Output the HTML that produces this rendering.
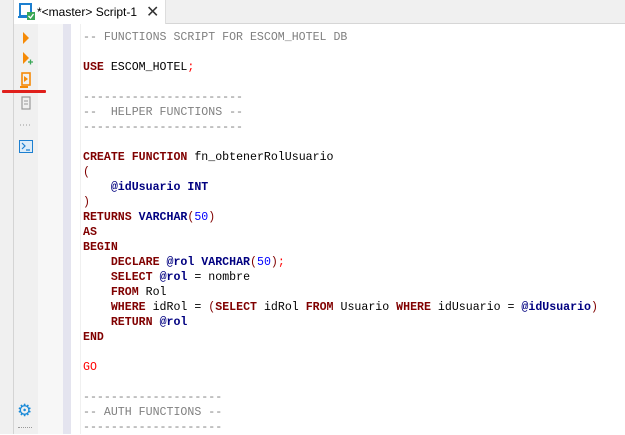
<!DOCTYPE html><html><head><style>
body{margin:0;width:625px;height:434px;overflow:hidden;background:#fff;position:relative;font-family:"Liberation Sans",sans-serif}
.a{position:absolute}
pre{margin:0;font-family:"Liberation Mono",monospace;font-size:11.6px;line-height:15px;color:#000}
.c{color:#808080}.k{color:#800000;font-weight:bold}.t{color:#000080;font-weight:bold}.n{color:#0000ff}.r{color:#ff0000}.p{color:#800000}
</style></head><body>
<div class="a" style="left:0;top:0;width:13px;height:434px;background:#f0f0f0;border-right:1px solid #d4d4d4"></div>
<div class="a" style="left:14px;top:0;width:611px;height:23px;background:#f0f0f0;border-bottom:1px solid #d6d6d6"></div>
<div class="a" style="left:14px;top:0;width:151px;height:24px;background:#fff;border-right:1px solid #ddd"></div>
<svg class="a" style="left:18px;top:3px" width="18" height="18"><rect x="2" y="1" width="11" height="12" fill="none" stroke="#1c7fd0" stroke-width="2"/><path d="M0 14h14" stroke="#1c7fd0" stroke-width="2"/><rect x="9" y="9" width="8" height="8" fill="#3aa757"/><path d="M10.5 13l2 2 3-4" stroke="#fff" fill="none" stroke-width="1.3"/></svg>
<div class="a" style="left:37px;top:5px;font-size:12px;color:#000">*&lt;master&gt; Script-1</div>
<div class="a" style="left:146px;top:2px;font-size:16px;color:#333">✕</div>
<div class="a" style="left:14px;top:24px;width:24px;height:410px;background:#f0f0f0"></div>
<div class="a" style="left:38px;top:24px;width:25px;height:410px;background:#f7f7f7"></div>
<div class="a" style="left:63px;top:24px;width:8px;height:410px;background:#e4e4ef"></div>
<div class="a" style="left:80px;top:24px;width:1px;height:410px;background:#f0f0f0"></div>
<svg class="a" style="left:18px;top:30px" width="16" height="130">
<path d="M5 2l6 6-6 6z" fill="#f58a07"/>
<path d="M5 22l6 6-6 6z" fill="#f58a07"/><path d="M10 32h5M12.5 29.5v5" stroke="#3aa757" stroke-width="1.3"/>
<rect x="4" y="43" width="8" height="12" fill="none" stroke="#f58a07" stroke-width="1.6"/><path d="M2 57h8" stroke="#f58a07" stroke-width="2"/><path d="M6 46l4 3-4 3z" fill="#f58a07"/>
<rect x="4" y="67" width="8" height="12" fill="none" stroke="#999" stroke-width="1.2"/><path d="M6 71h4M6 74h4" stroke="#999"/>
<path d="M2 95h1M5 95h1M8 95h1M11 95h1" stroke="#999"/>
<rect x="1" y="110" width="14" height="13" fill="#1c7fd0"/><rect x="2" y="111" width="12" height="11" fill="#fff"/><rect x="2" y="111" width="12" height="11" fill="#1c7fd0" opacity=".15"/><path d="M4 113l3 3-3 3M8 120h4" stroke="#1c7fd0" fill="none" stroke-width="1.2"/>
</svg>
<div class="a" style="left:2px;top:90px;width:44px;height:3px;background:#e0201c;border-radius:1px"></div>
<div class="a" style="left:17px;top:401px;font-size:17px;color:#1a8ad8">⚙</div>
<div class="a" style="left:18px;top:427px;width:14px;border-top:1px dotted #999"></div>
<pre class="a" style="left:83px;top:30px"><span class="c">-- FUNCTIONS SCRIPT FOR ESCOM_HOTEL DB</span>

<span class="k">USE</span> ESCOM_HOTEL<span class="r">;</span>

<span class="c">-----------------------</span>
<span class="c">--  HELPER FUNCTIONS --</span>
<span class="c">-----------------------</span>

<span class="k">CREATE FUNCTION</span> fn_obtenerRolUsuario
<span class="p">(</span>
    <span class="t">@idUsuario INT</span>
<span class="p">)</span>
<span class="k">RETURNS</span> <span class="t">VARCHAR</span><span class="p">(</span><span class="n">50</span><span class="p">)</span>
<span class="k">AS</span>
<span class="k">BEGIN</span>
    <span class="k">DECLARE</span> <span class="t">@rol VARCHAR</span><span class="p">(</span><span class="n">50</span><span class="p">)</span><span class="r">;</span>
    <span class="k">SELECT</span> <span class="t">@rol</span> = nombre
    <span class="k">FROM</span> Rol
    <span class="k">WHERE</span> idRol = <span class="p">(</span><span class="k">SELECT</span> idRol <span class="k">FROM</span> Usuario <span class="k">WHERE</span> idUsuario = <span class="t">@idUsuario</span><span class="p">)</span>
    <span class="k">RETURN</span> <span class="t">@rol</span>
<span class="k">END</span>

<span class="r">GO</span>

<span class="c">--------------------</span>
<span class="c">-- AUTH FUNCTIONS --</span>
<span class="c">--------------------</span></pre>
</body></html>
